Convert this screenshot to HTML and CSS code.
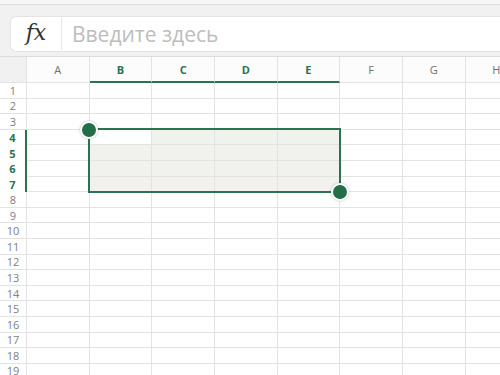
FILE: index.html
```html
<!DOCTYPE html>
<html lang="ru">
<head>
    <meta charset="UTF-8">
    <title>Таблица</title>
    <link rel="stylesheet" href="styles.css">
</head>
<body>
<div class="edge"></div>
<!-- строка формул -->
<div class="top">
    <div class="formula">
        <span class="fx">fx</span>
        <span class="input">Введите здесь</span>
    </div>
</div>
<!-- лист -->
<div class="sheet">
    <div class="grid"></div>
    <div class="selection">
        <span class="handle start"></span>
        <span class="handle end"></span>
    </div>
</div>
<script>
    var cols = ["A", "B", "C", "D", "E", "F", "G", "H"];
    var grid = document.querySelector(".grid");

    function cell(cls, text) {
        var div = document.createElement("div");
        div.setAttribute("class", cls);
        if (text) div.innerHTML = text;
        grid.appendChild(div);
    }

    // заголовки столбцов
    cell("corner");
    for (var i = 0; i < cols.length; i++) {
        var sel = i >= 1 && i <= 4;
        cell(sel ? "col-head active" : "col-head", cols[i]);
    }
    // строки
    for (var r = 1; r <= 19; r++) {
        var rowSel = r >= 4 && r <= 7;
        cell(rowSel ? "row-head active" : "row-head", r);
        for (var c = 0; c < cols.length; c++) {
            var cls = "cell";
            if (rowSel && c >= 1 && c <= 4 && !(r == 4 && c == 1)) cls += " picked";
            cell(cls);
        }
    }
</script>
</body>
</html>
```

FILE: styles.css
```css
body {
    margin: 0;
    padding: 0;
    background-color: #FFF;
    font-family: "Open Sans", "Liberation Sans", sans-serif;
    overflow: hidden;
}
.edge {
    height: 4px;
    background-color: #F6F6F6;
    border-bottom: 1px solid #DEDEDE;
}
.top {
    padding: 11px 0 4px 10px;
    background-color: #F1F1F1;
    border-bottom: 1px solid #DCDCDC;
}
.formula {
    display: flex;
    align-items: center;
    height: 36px;
    box-sizing: border-box;
    background-color: #FFF;
    border: 1px solid #E4E4E4;
    border-right: none;
    border-radius: 6px 0 0 6px;
}
.fx {
    width: 50px;
    height: 32px;
    line-height: 30px;
    text-align: center;
    border-right: 1px solid #E6E6E6;
    font-family: "DejaVu Serif", "Liberation Serif", serif;
    font-style: italic;
    font-size: 22px;
    color: #333;
}
.input {
    padding-left: 10px;
    font-size: 21px;
    color: #BDBDBD;
}

.sheet {
    position: relative;
}
.grid {
    display: grid;
    grid-template-columns: 27px repeat(8, 62.67px);
    grid-template-rows: 26px;
    grid-auto-rows: 15.6px;
}
.grid > div {
    box-sizing: border-box;
    border-right: 1px solid #E3E3E3;
    border-bottom: 1px solid #E3E3E3;
}
.corner {
    background-color: #F1F1F1;
}
.col-head {
    display: flex;
    align-items: center;
    justify-content: center;
    font-size: 11px;
    color: #707070;
    background-color: #FCFCFC;
}
.row-head {
    display: flex;
    align-items: center;
    justify-content: center;
    font-size: 11px;
    color: #808080;
    line-height: 1;
}
.grid > .col-head.active {
    font-weight: bold;
    color: #2A7350;
    border-bottom: 2px solid #2A7350;
}
.grid > .row-head.active {
    font-weight: bold;
    color: #2A7350;
    border-bottom: none;
    border-right: 2px solid #2A7350;
}
.cell.picked {
    background-color: #F1F2EE;
}

/* выделение */
.selection {
    position: absolute;
    left: 88px;
    top: 71px;
    width: 253px;
    height: 65px;
    box-sizing: border-box;
    border: 2px solid #2A7350;
}
.handle {
    position: absolute;
    width: 14px;
    height: 14px;
    border-radius: 50%;
    background-color: #237048;
    border: 2px solid #FFF;
    box-shadow: 0 0 2px rgba(0, 0, 0, 0.3);
}
.handle.start {
    left: -10px;
    top: -9px;
}
.handle.end {
    right: -10px;
    bottom: -10px;
}
```
